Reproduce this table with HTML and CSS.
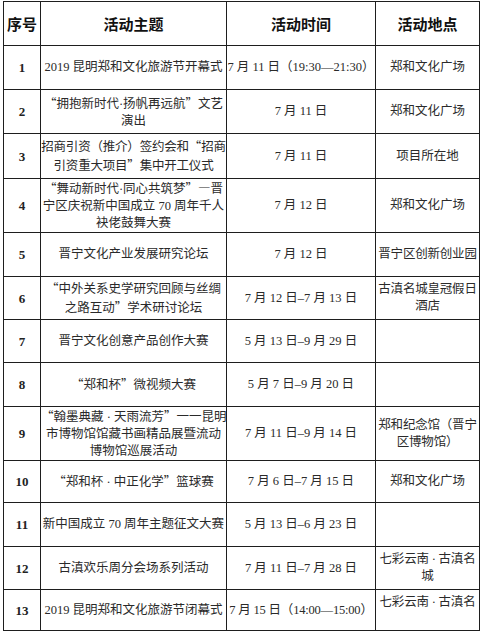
FILE: index.html
```html
<!DOCTYPE html>
<html lang="zh-CN">
<head>
<meta charset="utf-8">
<title>活动安排</title>
<link rel="stylesheet" href="styles.css">
</head>
<body>
<table class="schedule">
  <colgroup>
    <col class="c-no">
    <col class="c-topic">
    <col class="c-time">
    <col class="c-place">
  </colgroup>
  <thead>
    <tr class="h44">
      <th>序号</th>
      <th>活动主题</th>
      <th>活动时间</th>
      <th>活动地点</th>
    </tr>
  </thead>
  <tbody>
    <tr class="h44">
      <td class="no">1</td>
      <td>2019 昆明郑和文化旅游节开幕式</td>
      <td>7 月 11 日（19:30—21:30）</td>
      <td>郑和文化广场</td>
    </tr>
    <tr class="h44">
      <td class="no">2</td>
      <td><span class="cj">“</span>拥抱新时代·扬帆再远航<span class="cj">”</span>文艺<br>演出</td>
      <td>7 月 11 日</td>
      <td>郑和文化广场</td>
    </tr>
    <tr class="h45">
      <td class="no">3</td>
      <td class="tight">招商引资（推介）签约会和<span class="cj">“</span>招商<br>引资重大项目<span class="cj">”</span>集中开工仪式</td>
      <td>7 月 11 日</td>
      <td>项目所在地</td>
    </tr>
    <tr class="h51">
      <td class="no">4</td>
      <td><span class="cj">“</span>舞动新时代·同心共筑梦<span class="cj">”—</span>晋<br>宁区庆祝新中国成立 70 周年千人<br>袂佬鼓舞大赛</td>
      <td>7 月 12 日</td>
      <td>郑和文化广场</td>
    </tr>
    <tr class="h44">
      <td class="no">5</td>
      <td>晋宁文化产业发展研究论坛</td>
      <td>7 月 12 日</td>
      <td class="tight">晋宁区创新创业园</td>
    </tr>
    <tr class="h43">
      <td class="no">6</td>
      <td><span class="cj">“</span>中外关系史学研究回顾与丝绸<br>之路互动<span class="cj">”</span>学术研讨论坛</td>
      <td>7 月 12 日–7 月 13 日</td>
      <td class="tight">古滇名城皇冠假日<br>酒店</td>
    </tr>
    <tr class="h43">
      <td class="no">7</td>
      <td>晋宁文化创意产品创作大赛</td>
      <td>5 月 13 日–9 月 29 日</td>
      <td></td>
    </tr>
    <tr class="h44">
      <td class="no">8</td>
      <td><span class="cj">“</span>郑和杯<span class="cj">”</span>微视频大赛</td>
      <td>5 月 7 日–9 月 20 日</td>
      <td></td>
    </tr>
    <tr class="h54">
      <td class="no">9</td>
      <td><span class="cj">“</span>翰墨典藏 · 天雨流芳<span class="cj">”</span>一一昆明<br>市博物馆馆藏书画精品展暨流动<br>博物馆巡展活动</td>
      <td>7 月 11 日–9 月 14 日</td>
      <td class="tight">郑和纪念馆（晋宁<br>区博物馆）</td>
    </tr>
    <tr class="h42">
      <td class="no">10</td>
      <td><span class="cj">“</span>郑和杯 · 中正化学<span class="cj">”</span>篮球赛</td>
      <td>7 月 6 日–7 月 15 日</td>
      <td>郑和文化广场</td>
    </tr>
    <tr class="h44">
      <td class="no">11</td>
      <td>新中国成立 70 周年主题征文大赛</td>
      <td>5 月 13 日–6 月 23 日</td>
      <td></td>
    </tr>
    <tr class="h43">
      <td class="no">12</td>
      <td>古滇欢乐周分会场系列活动</td>
      <td>7 月 11 日–7 月 28 日</td>
      <td class="tight">七彩云南 · 古滇名<br>城</td>
    </tr>
    <tr class="h41">
      <td class="no">13</td>
      <td>2019 昆明郑和文化旅游节闭幕式</td>
      <td class="tight">7 月 15 日（14:00—15:00）</td>
      <td class="tight lift">七彩云南 · 古滇名</td>
    </tr>
  </tbody>
</table>
</body>
</html>
```

FILE: styles.css
```css
html, body {
  background: #ffffff;
}

body {
  margin: 0;
  padding: 1px 0 0 3px;
  font-family: "Liberation Serif", "Noto Sans CJK SC", serif;
  color: #2a2a2a;
}

.schedule {
  border-collapse: collapse;
  table-layout: fixed;
  width: 476px;
}

.c-no { width: 37px; }
.c-topic { width: 186px; }
.c-time { width: 149px; }
.c-place { width: 104px; }

.schedule th,
.schedule td {
  border: 1px solid #1e1e1e;
  padding: 0;
  text-align: center;
  vertical-align: middle;
  white-space: nowrap;
  overflow: visible;
  font-size: 12.5px;
  line-height: 17px;
}

.schedule th {
  font-family: "Noto Sans CJK SC", sans-serif;
  font-weight: 700;
  font-size: 15px;
  color: #111111;
}

.schedule td.no {
  font-weight: 700;
  font-size: 13px;
  color: #222222;
}

.cj {
  font-family: "Noto Sans CJK SC", sans-serif;
}

.tight {
  letter-spacing: -0.2px;
}

.lift {
  padding-bottom: 16px !important;
}

.h41 { height: 41px; }
.h42 { height: 42px; }
.h43 { height: 43px; }
.h44 { height: 44px; }
.h45 { height: 45px; }
.h51 { height: 51px; }
.h54 { height: 54px; }
```
